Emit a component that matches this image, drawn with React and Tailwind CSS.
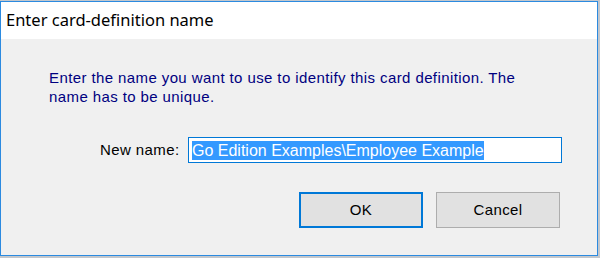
export default function App() {
  return (
    <div className="w-[600px] h-[258px] bg-[#c3c7cc] pt-[1px] pr-[2px] pb-[2px]">
      <div className="flex flex-col h-full border border-[#2b8ae0] bg-[#f0f0f0]">
        <div className="h-[37px] bg-white flex items-center pl-[5px] text-[16.5px] text-black" style={{ fontFamily: '"Noto Sans", "Open Sans", sans-serif' }}>
          Enter card-definition name
        </div>
        <div className="flex-1 flex flex-col tracking-[0.4px]" style={{ fontFamily: '"Liberation Sans", Arial, sans-serif' }}>
          <p className="mt-[29px] ml-[48px] w-[490px] text-[15px] leading-[19px] text-[#000080]">
            Enter the name you want to use to identify this card definition. The name has to be unique.
          </p>
          <div className="flex items-center mt-[31px]">
            <span className="ml-[99px] w-[88px] text-[15px] text-black">New name:</span>
            <div className="w-[374px] h-[26px] border border-[#0078d7] bg-white flex items-center pl-[3px] tracking-normal">
              <span className="bg-[#3399ff] text-white text-[16px] leading-[19px]">Go Edition Examples\Employee Example</span>
            </div>
          </div>
          <div className="flex mt-[29px] ml-[298px] gap-[13px]">
            <button className="w-[124px] h-[36px] border-2 border-[#0078d7] bg-[#e1e1e1] text-[15px] text-black">OK</button>
            <button className="w-[124px] h-[36px] border border-[#adadad] bg-[#e1e1e1] text-[15px] text-black">Cancel</button>
          </div>
        </div>
      </div>
    </div>
  )
}
